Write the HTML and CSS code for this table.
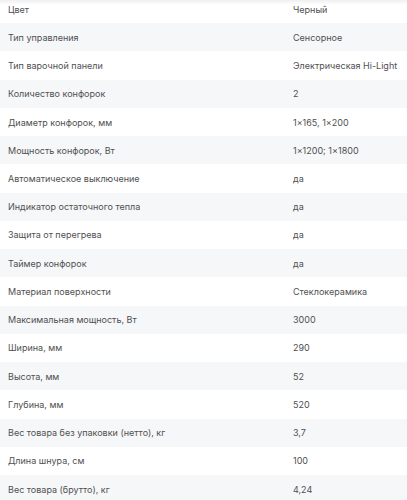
FILE: index.html
```html
<!DOCTYPE html>
<html lang="ru">
<head>
<meta charset="utf-8">
<title>Характеристики</title>
<link rel="stylesheet" href="styles.css">
</head>
<body>
<div class="shade"></div>
<dl class="specs">
  <div class="row"><dt>Цвет</dt><dd>Черный</dd></div>
  <div class="row"><dt>Тип управления</dt><dd>Сенсорное</dd></div>
  <div class="row"><dt>Тип варочной панели</dt><dd>Электрическая Hi-Light</dd></div>
  <div class="row"><dt>Количество конфорок</dt><dd>2</dd></div>
  <div class="row"><dt>Диаметр конфорок, мм</dt><dd>1×165, 1×200</dd></div>
  <div class="row"><dt>Мощность конфорок, Вт</dt><dd>1×1200; 1×1800</dd></div>
  <div class="row"><dt>Автоматическое выключение</dt><dd>да</dd></div>
  <div class="row"><dt>Индикатор остаточного тепла</dt><dd>да</dd></div>
  <div class="row"><dt>Защита от перегрева</dt><dd>да</dd></div>
  <div class="row"><dt>Таймер конфорок</dt><dd>да</dd></div>
  <div class="row"><dt>Материал поверхности</dt><dd>Стеклокерамика</dd></div>
  <div class="row"><dt>Максимальная мощность, Вт</dt><dd>3000</dd></div>
  <div class="row"><dt>Ширина, мм</dt><dd>290</dd></div>
  <div class="row"><dt>Высота, мм</dt><dd>52</dd></div>
  <div class="row"><dt>Глубина, мм</dt><dd>520</dd></div>
  <div class="row"><dt>Вес товара без упаковки (нетто), кг</dt><dd>3,7</dd></div>
  <div class="row"><dt>Длина шнура, см</dt><dd>100</dd></div>
  <div class="row"><dt>Вес товара (брутто), кг</dt><dd>4,24</dd></div>
</dl>
</body>
</html>
```
FILE: styles.css
```css
html, body {
  margin: 0;
  padding: 0;
  background: #ffffff;
  overflow: hidden;
}
body {
  font-family: Inter, "Noto Sans", "Liberation Sans", sans-serif;
  font-size: 9px;
  color: #505050;
}
.shade {
  position: fixed;
  top: 0;
  left: 0;
  right: 0;
  height: 5px;
  background: linear-gradient(rgba(0,0,0,0.06), rgba(0,0,0,0));
  z-index: 2;
}
.specs {
  margin: -5px 0 0 0;
  padding: 0;
}
.row {
  display: grid;
  grid-template-columns: 293px 1fr;
  align-items: center;
  height: 28.24px;
}
.row:nth-child(even) {
  background: #f6f7f9;
}
.row dt {
  margin: 0;
  padding-left: 8px;
}
.row dd {
  margin: 0;
  white-space: nowrap;
}
```
